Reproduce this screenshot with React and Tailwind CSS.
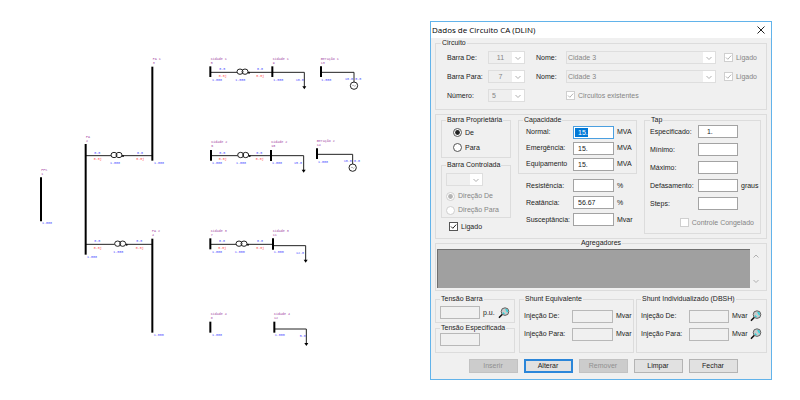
import { useState } from "react";
import clsx from "clsx";

// Diagram units: three per screen pixel at the default width
const buses = [
  { x: 123, y1: 532, y2: 664, name: "PPS", id: "1", lx: 124, ly: 512, volt: [126, 672] },
  { x: 257, y1: 432, y2: 764, name: "PA", id: "2", lx: 258, ly: 413, volt: [261, 775] },
  { x: 457, y1: 200, y2: 482, name: "PA 1", id: "3", lx: 458, ly: 180, volt: [462, 493] },
  { x: 457, y1: 716, y2: 998, name: "PA 2", id: "4", lx: 456, ly: 695, volt: [461, 1009] },
  { x: 631, y1: 199, y2: 231, name: "Cidade 1", id: "5", lx: 632, ly: 180, volt: [636, 243] },
  { x: 817, y1: 199, y2: 231, name: "Cidade 1", id: "9", lx: 818, ly: 180, volt: [820, 243] },
  { x: 963, y1: 199, y2: 231, name: "Geração 1", id: "13", lx: 962, ly: 180, volt: [964, 243] },
  { x: 633, y1: 450, y2: 482, name: "Cidade 2", id: "6", lx: 634, ly: 429, volt: [636, 493] },
  { x: 813, y1: 450, y2: 483, name: "Cidade 2", id: "10", lx: 814, ly: 429, volt: [816, 493] },
  { x: 951, y1: 445, y2: 477, name: "Geração 2", id: "14", lx: 950, ly: 425, volt: [954, 489] },
  { x: 631, y1: 715, y2: 748, name: "Cidade 3", id: "7", lx: 632, ly: 695, volt: [636, 759] },
  { x: 819, y1: 715, y2: 749, name: "Cidade 3", id: "11", lx: 818, ly: 695, volt: [821, 759] },
  { x: 631, y1: 965, y2: 998, name: "Cidade 4", id: "8", lx: 632, ly: 945, volt: [636, 1009] },
  { x: 823, y1: 965, y2: 998, name: "Cidade 4", id: "12", lx: 822, ly: 945, volt: [824, 1009] },
];

const lines = [
  { x1: 257, x2: 457, y: 467, cx: 349, left: 283, right: 411, tap: 330 },
  { x1: 257, x2: 457, y: 733, cx: 360, left: 283, right: 409, tap: 340 },
  { x1: 631, x2: 817, y: 217, cx: 727, left: 658, right: 771, tap: 706 },
  { x1: 633, x2: 813, y: 467, cx: 729, left: 658, right: 769, tap: 708 },
  { x1: 631, x2: 819, y: 733, cx: 724, left: 657, right: 771, tap: 704 },
];

const loads = [
  { x1: 817, x2: 913, y: 217, text: "10.0", tx: 887, ty: 243 },
  { x1: 813, x2: 911, y: 467, text: "15.0", tx: 882, ty: 493 },
  { x1: 819, x2: 917, y: 737, text: "12.0", tx: 888, ty: 763 },
  { x1: 823, x2: 919, y: 987, text: "5.0", tx: 899, ty: 1011 },
];

const generators = [
  { x1: 963, x2: 1062, y: 217 },
  { x1: 951, x2: 1058, y: 463 },
];

function Diagram() {
  return (
    <svg viewBox="0 0 1290 1200" className="flex-1 min-w-0 h-auto self-start" fontFamily="'Liberation Mono', monospace" fontSize="10">
      {lines.map((l) => (
        <g key={`${l.x1}-${l.y}`}>
          <path d={`M${l.x1} ${l.y}H${l.cx - 16}M${l.cx + 17} ${l.y}H${l.x2}`} stroke="#222" strokeWidth="3" />
          <g fill="none" stroke="#222" strokeWidth="3">
            <ellipse cx={l.cx - 7} cy={l.y - 2} rx="9" ry="8" />
            <ellipse cx={l.cx + 8} cy={l.y - 2} rx="9" ry="8" />
          </g>
          <circle cx={l.cx + 20} cy={l.y + 1} r="3" fill="#111" />
          <g fill="#4646ff">
            <text x={l.left} y={l.y - 6}>0.0</text>
            <text x={l.right} y={l.y - 6}>0.0</text>
            <text x={l.tap} y={l.y + 25}>1.000</text>
          </g>
          <g fill="#ff4a4a">
            <text x={l.left - 2} y={l.y + 14}>0.0j</text>
            <text x={l.right - 2} y={l.y + 14}>0.0j</text>
          </g>
        </g>
      ))}
      {loads.map((l) => (
        <g key={l.y}>
          <path d={`M${l.x1} ${l.y}H${l.x2}v46`} fill="none" stroke="#222" strokeWidth="3" />
          <path d={`M${l.x2 - 6} ${l.y + 42}h12l-6 9z`} fill="#000" />
          <text x={l.tx} y={l.ty} fill="#4646ff">{l.text}</text>
        </g>
      ))}
      {generators.map((g) => (
        <g key={g.y}>
          <path d={`M${g.x1} ${g.y}H${g.x2}v30`} fill="none" stroke="#222" strokeWidth="3" />
          <circle cx={g.x2} cy={g.y + 40} r="11" fill="#fff" stroke="#222" strokeWidth="3" />
          <path d={`M${g.x2 - 5} ${g.y + 41}q3 -6 5 -1t5 -1`} fill="none" stroke="#888" strokeWidth="2" />
          <text x={g.x2 - 27} y={g.y + 24} fill="#4646ff">10.0</text>
          <text x={g.x2 + 4} y={g.y + 24} fill="#4646ff">0.0</text>
        </g>
      ))}
      {buses.map((b) => (
        <g key={b.id}>
          <path d={`M${b.x} ${b.y1}V${b.y2}`} stroke="#000" strokeWidth="6" />
          <g fill="#a03ca0">
            <text x={b.lx} y={b.ly}>{b.name}</text>
            <text x={b.lx} y={b.ly + 13}>{b.id}</text>
          </g>
          <text x={b.volt[0]} y={b.volt[1]} fill="#4646ff">1.000</text>
        </g>
      ))}
    </svg>
  );
}

function Group({ title, center, className, children }) {
  return (
    <fieldset className={clsx("min-w-0 border border-[#dcdcdc]", className)}>
      <legend className={clsx("px-px whitespace-nowrap", center && "mx-auto")}>{title}</legend>
      {children}
    </fieldset>
  );
}

function Chevron({ up }) {
  return (
    <svg viewBox="0 0 12 12" className="w-3 h-3 shrink-0" fill="none" stroke="#b0b0b0" strokeWidth="1">
      <path d={up ? "M3.5 7.5 6 5l2.5 2.5" : "M3.5 5 6 7.5 8.5 5"} />
    </svg>
  );
}

function Combo({ id, value, label, className, selectClass }) {
  return (
    <div className={clsx("flex items-center h-[13px] border border-[#dedede] bg-white", className)}>
      <select id={id} aria-label={label} disabled defaultValue={value} className={clsx("appearance-none flex-1 min-w-0 h-[11px] bg-[#efefef] text-[#858585] opacity-100", selectClass)}>
        <option>{value}</option>
      </select>
      <Chevron />
    </div>
  );
}

function Tick({ type = "checkbox", label, checked = false, disabled, name, onChange, className }) {
  const radio = type === "radio";
  return (
    <label className={clsx("flex items-center gap-[3px] whitespace-nowrap", disabled && "text-[#858585]", className)}>
      <span className="grid shrink-0">
        <input
          type={type}
          name={name}
          checked={checked}
          disabled={disabled}
          onChange={onChange}
          className={clsx("appearance-none col-start-1 row-start-1 w-[9px] h-[9px] border bg-white", radio && "rounded-full", disabled ? "border-[#cfcfcf]" : "border-[#555]")}
        />
        {checked && (
          <svg viewBox="0 0 9 9" className={clsx("col-start-1 row-start-1 w-[9px] h-[9px] pointer-events-none", disabled ? "text-[#b4b4b4]" : "text-[#222]")}>
            {radio ? <circle cx="4.5" cy="4.5" r="2.4" fill="currentColor" /> : <path d="M2 4.5 3.8 6.3 7.2 2.6" fill="none" stroke="currentColor" />}
          </svg>
        )}
      </span>
      {label}
    </label>
  );
}

function Field({ id, label, value = "", unit, disabled, selected, lens }) {
  return (
    <>
      <label htmlFor={id} className="whitespace-nowrap">{label}</label>
      <input
        id={id}
        defaultValue={value}
        disabled={disabled}
        className={clsx("w-full min-w-0 h-[13px] border px-1 outline-none", disabled ? "bg-[#f0f0f0] border-[#b8b8b8]" : selected ? "bg-[linear-gradient(#0078d7,#0078d7)] bg-no-repeat bg-size-[13px_9px] bg-position-[1px_1px] bg-white text-white border-[#4a9fe0]" : "bg-white border-[#a3a3a3]")}
      />
      <span className="pl-[3px] whitespace-nowrap">{unit}</span>
      {lens && <Lens />}
    </>
  );
}

function Lens() {
  return (
    <button type="button" aria-label="Localizar" className="w-3 h-3 shrink-0">
      <svg viewBox="0 0 12 12" className="w-3 h-3">
        <path d="M4.4 7.2 1.4 10.3" stroke="#111" strokeWidth="1.6" strokeLinecap="round" />
        <circle cx="7" cy="4.6" r="3.8" fill="#c8cccc" stroke="#555" strokeWidth="0.9" />
        <path d="M7.5 2.4q2 .5 1.8 2.8M5 5.5q.5 1.2 1.6 1.4" fill="none" stroke="#22d3dd" strokeWidth="1.3" />
      </svg>
    </button>
  );
}

function CircuitGroup() {
  return (
    <Group title="Circuito" className="px-[5px] pb-1">
      <div className="grid grid-cols-[41px_37px_30px_1fr_auto] auto-rows-[19px] items-center pl-1.5 pr-1 pt-px">
        <label htmlFor="de">Barra De:</label>
        <Combo id="de" value="11" selectClass="text-center" />
        <label htmlFor="nomeDe" className="pl-[11px] w-10">Nome:</label>
        <Combo id="nomeDe" value="Cidade 3" className="ml-[11px]" selectClass="pl-px" />
        <Tick label="Ligado" checked disabled className="ml-2" />

        <label htmlFor="para">Barra Para:</label>
        <Combo id="para" value="7" selectClass="text-center" />
        <label htmlFor="nomePara" className="pl-[11px] w-10">Nome:</label>
        <Combo id="nomePara" value="Cidade 3" className="ml-[11px]" selectClass="pl-px" />
        <Tick label="Ligado" checked disabled className="ml-2" />

        <label htmlFor="numero">Número:</label>
        <Combo id="numero" value="5" selectClass="pl-[3px]" />
        <Tick label="Circuitos existentes" checked disabled className="col-start-4 ml-[11px]" />
      </div>
    </Group>
  );
}

function OwnerColumn() {
  const [owner, setOwner] = useState("De");
  const [on, setOn] = useState(true);

  return (
    <div className="min-w-0">
      <Group title="Barra Proprietária" className="px-1 pb-0.5">
        <div className="grid auto-rows-[15px] items-center pl-[7px] pt-px">
          {["De", "Para"].map((v) => (
            <Tick key={v} type="radio" name="owner" label={v} checked={owner === v} onChange={() => setOwner(v)} />
          ))}
        </div>
      </Group>
      <Group title="Barra Controlada" className="mt-[3px] px-1">
        <Combo label="Barra Controlada" value="" className="w-[37px] mt-1 mb-[3px]" />
        <div className="grid auto-rows-[14px] items-center">
          <Tick type="radio" name="dir" label="Direção De" checked disabled />
          <Tick type="radio" name="dir" label="Direção Para" disabled />
        </div>
      </Group>
      <Tick label="Ligado" checked={on} onChange={() => setOn(!on)} className="mt-1 ml-2" />
    </div>
  );
}

function CapacityColumn() {
  return (
    <div className="min-w-0">
      <Group title="Capacidade" className="px-1 pb-px">
        <div className="grid grid-cols-[47px_41px_1fr] auto-rows-[16px] items-center pl-[3px]">
          <Field id="normal" label="Normal:" value="15." unit="MVA" selected />
          <Field id="emergencia" label="Emergência:" value="15." unit="MVA" />
          <Field id="equipamento" label="Equipamento" value="15." unit="MVA" />
        </div>
      </Group>
      <div className="grid grid-cols-[47px_41px_1fr] auto-rows-[17px] items-center pl-2 mt-[3px]">
        <Field id="resistencia" label="Resistência:" unit="%" />
        <Field id="reatancia" label="Reatância:" value="56.67" unit="%" />
        <Field id="susceptancia" label="Susceptância:" unit="Mvar" />
      </div>
    </div>
  );
}

function TapGroup() {
  return (
    <Group title="Tap" className="pl-[5px] self-start pb-1.5">
      <div className="grid grid-cols-[48px_40px_1fr] gap-y-[5px] items-center pt-px">
        <Field id="especificado" label="Especificado:" value="  1." />
        <Field id="minimo" label="Mínimo:" />
        <Field id="maximo" label="Máximo:" />
        <Field id="defasamento" label="Defasamento:" unit="graus" />
        <Field id="steps" label="Steps:" />
      </div>
      <Tick label="Controle Congelado" disabled className="justify-end pr-[6px] mt-2" />
    </Group>
  );
}

function Aggregators() {
  return (
    <Group title="Agregadores" center className="px-px pb-0.5">
      <div className="flex h-[39px] mt-0.5 mr-[3px]">
        <div className="flex-1 bg-[#a0a0a0] border-t border-l border-[#707070]" />
        <div className="flex flex-col justify-between py-px">
          <button type="button" aria-label="Subir"><Chevron up /></button>
          <button type="button" aria-label="Descer"><Chevron /></button>
        </div>
      </div>
    </Group>
  );
}

function VoltageRow() {
  return (
    <div className="grid grid-cols-[80fr_119fr_133fr] mt-1">
      <div className="flex flex-col min-w-0">
        <Group title="Tensão Barra" className="px-1 pb-[3px]">
          <div className="flex items-center h-[13px] mt-[3px]">
            <input aria-label="Tensão Barra" disabled className="w-10 h-[13px] border border-[#b8b8b8] bg-[#f0f0f0]" />
            <span className="pl-[3px] w-[18px]">p.u.</span>
            <Lens />
          </div>
        </Group>
        <Group title="Tensão Especificada" className="px-1 mt-px flex-1">
          <input aria-label="Tensão Especificada" disabled className="block w-10 h-[13px] border border-[#b8b8b8] bg-[#f0f0f0] mt-px" />
        </Group>
      </div>
      <Group title="Shunt Equivalente" className="ml-1 px-1 pb-[9px]">
        <div className="grid grid-cols-[48px_41px_1fr] auto-rows-[18px] items-center pt-1">
          <Field id="eqDe" label="Injeção De:" unit="Mvar" disabled />
          <Field id="eqPara" label="Injeção Para:" unit="Mvar" disabled />
        </div>
      </Group>
      <Group title="Shunt Individualizado (DBSH)" className="ml-0.5 px-1 pb-[9px]">
        <div className="grid grid-cols-[48px_40px_1fr_12px] auto-rows-[18px] items-center pt-1">
          <Field id="indDe" label="Injeção De:" unit="Mvar" disabled lens />
          <Field id="indPara" label="Injeção Para:" unit="Mvar" disabled lens />
        </div>
      </Group>
    </div>
  );
}

const actions = [
  { label: "Inserir", disabled: true },
  { label: "Alterar", primary: true },
  { label: "Remover", disabled: true },
  { label: "Limpar" },
  { label: "Fechar" },
];

function Dialog() {
  return (
    <form className="w-[342px] shrink-0 self-start mt-[21px] mr-7 border border-[#62b3ea] bg-[#f0f0f0] text-[#222]">
      <div className="flex items-center justify-between h-4 pl-px pr-1 bg-white">
        <h1 className="font-['Open_Sans',sans-serif] text-[8px] text-black">Dados de Circuito CA (DLIN)</h1>
        <button type="button" aria-label="Fechar janela" className="w-3 h-3">
          <svg viewBox="0 0 12 12" className="w-3 h-3" stroke="#222" strokeWidth="1">
            <path d="M2.5 2.5l7 7M9.5 2.5l-7 7" />
          </svg>
        </button>
      </div>

      <div className="px-1 pt-px pb-1.5">
        <CircuitGroup />
        <div className="grid grid-cols-[70fr_119fr_117fr] gap-[7px] mt-1 px-[5px] pt-px pb-1 border border-[#dcdcdc]">
          <OwnerColumn />
          <CapacityColumn />
          <TapGroup />
        </div>
        <Aggregators />
        <VoltageRow />

        <div className="flex justify-center gap-[6px] mt-1.5 pl-1">
          {actions.map((a) => (
            <button
              key={a.label}
              type="button"
              disabled={a.disabled}
              className={clsx(
                "w-[49px] h-[14px]",
                a.disabled ? "bg-[#cccccc] border border-[#c2c2c2] text-[#909090]" : "bg-[#e1e1e1]",
                a.primary && "border-2 border-[#2b86d9]",
                !a.primary && !a.disabled && "border border-[#b4b4b4]"
              )}
            >
              {a.label}
            </button>
          ))}
        </div>
      </div>
    </form>
  );
}

export default function App() {
  return (
    <main className="flex min-h-screen bg-white font-['Liberation_Sans',Arial,sans-serif] text-[7px] leading-[8px]">
      <Diagram />
      <Dialog />
    </main>
  );
}
